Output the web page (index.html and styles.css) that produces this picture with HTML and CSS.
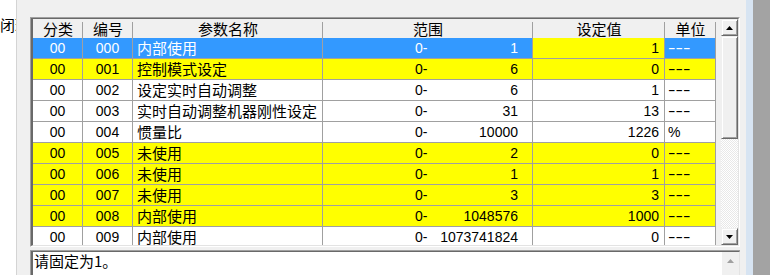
FILE: index.html
```html
<!DOCTYPE html>
<html lang="zh-CN">
<head>
    <meta charset="UTF-8">
    <title>参数设定</title>
    <link rel="stylesheet" href="styles.css">
</head>
<body>
    <div class="side"><span>闭环</span></div>

    <div class="panel">
        <div class="grid">
            <div class="grid-in">
                <div class="list">
                    <div class="row head">
                        <div class="cell">分类</div>
                        <div class="cell">编号</div>
                        <div class="cell">参数名称</div>
                        <div class="cell">范围</div>
                        <div class="cell">设定值</div>
                        <div class="cell">单位</div>
                    </div>
                    <div class="row yellow sel">
                        <div class="cell c">00</div><div class="cell c">000</div>
                        <div class="cell name">内部使用</div>
                        <div class="cell range"><span>0-</span><span>1</span></div>
                        <div class="cell val">1</div><div class="cell unit"><span>---</span></div>
                    </div>
                    <div class="row yellow">
                        <div class="cell c">00</div><div class="cell c">001</div>
                        <div class="cell name">控制模式设定</div>
                        <div class="cell range"><span>0-</span><span>6</span></div>
                        <div class="cell val">0</div><div class="cell unit"><span>---</span></div>
                    </div>
                    <div class="row">
                        <div class="cell c">00</div><div class="cell c">002</div>
                        <div class="cell name">设定实时自动调整</div>
                        <div class="cell range"><span>0-</span><span>6</span></div>
                        <div class="cell val">1</div><div class="cell unit"><span>---</span></div>
                    </div>
                    <div class="row">
                        <div class="cell c">00</div><div class="cell c">003</div>
                        <div class="cell name">实时自动调整机器刚性设定</div>
                        <div class="cell range"><span>0-</span><span>31</span></div>
                        <div class="cell val">13</div><div class="cell unit"><span>---</span></div>
                    </div>
                    <div class="row">
                        <div class="cell c">00</div><div class="cell c">004</div>
                        <div class="cell name">惯量比</div>
                        <div class="cell range"><span>0-</span><span>10000</span></div>
                        <div class="cell val">1226</div><div class="cell unit">%</div>
                    </div>
                    <div class="row yellow">
                        <div class="cell c">00</div><div class="cell c">005</div>
                        <div class="cell name">未使用</div>
                        <div class="cell range"><span>0-</span><span>2</span></div>
                        <div class="cell val">0</div><div class="cell unit"><span>---</span></div>
                    </div>
                    <div class="row yellow">
                        <div class="cell c">00</div><div class="cell c">006</div>
                        <div class="cell name">未使用</div>
                        <div class="cell range"><span>0-</span><span>1</span></div>
                        <div class="cell val">1</div><div class="cell unit"><span>---</span></div>
                    </div>
                    <div class="row yellow">
                        <div class="cell c">00</div><div class="cell c">007</div>
                        <div class="cell name">未使用</div>
                        <div class="cell range"><span>0-</span><span>3</span></div>
                        <div class="cell val">3</div><div class="cell unit"><span>---</span></div>
                    </div>
                    <div class="row yellow">
                        <div class="cell c">00</div><div class="cell c">008</div>
                        <div class="cell name">内部使用</div>
                        <div class="cell range"><span>0-</span><span>1048576</span></div>
                        <div class="cell val">1000</div><div class="cell unit"><span>---</span></div>
                    </div>
                    <div class="row">
                        <div class="cell c">00</div><div class="cell c">009</div>
                        <div class="cell name">内部使用</div>
                        <div class="cell range"><span>0-</span><span>1073741824</span></div>
                        <div class="cell val">0</div><div class="cell unit"><span>---</span></div>
                    </div>
                </div>
                <div class="gap"></div>
                <div class="vscroll">
                    <div class="btn">
                        <svg width="7" height="4" viewBox="0 0 7 4"><polygon points="3.5,0 7,4 0,4" fill="#000"/></svg>
                    </div>
                    <div class="btn thumb"></div>
                    <div class="track"></div>
                    <div class="btn">
                        <svg width="7" height="4" viewBox="0 0 7 4"><polygon points="0,0 7,0 3.5,4" fill="#000"/></svg>
                    </div>
                </div>
            </div>
        </div>

        <div class="memo">
            <div class="memo-in">
                <div class="memo-text">请固定为1。</div>
                <div class="vscroll flat">
                    <div class="btn off">
                        <svg width="7" height="4" viewBox="0 0 7 4"><polygon points="3.5,0 7,4 0,4" fill="#a0a0a0"/></svg>
                    </div>
                </div>
            </div>
        </div>
    </div>

    <div class="edge"></div>
    <div class="frame"></div>
</body>
</html>
```

FILE: styles.css
```css
body {
    margin: 0;
    width: 770px;
    height: 275px;
    overflow: hidden;
    display: flex;
    font-family: "Liberation Sans", "Noto Sans CJK SC", sans-serif;
    font-size: 14px;
    color: #000;
}
.side {
    width: 16px;
    border-right: 1px solid #d4d4d4;
    background: #fff;
    overflow: hidden;
    white-space: nowrap;
}
.side span {
    display: block;
    margin-top: 17px;
    font-family: "Noto Sans CJK SC", sans-serif;
    font-size: 15px;
    line-height: 16px;
}
.panel {
    width: 729px;
    background: #f0f0f0;
    padding: 17px 0 0 13px;
    box-sizing: border-box;
}
.edge {
    width: 7px;
    background: #d7e4f2;
}
.frame {
    width: 17px;
    background: #a3a3a3;
}

/* parameter list */
.grid {
    width: 710px;
    height: 230px;
    box-sizing: border-box;
    border: 1px solid;
    border-color: #a0a0a0 #fff #fff #a0a0a0;
}
.grid-in {
    height: 100%;
    box-sizing: border-box;
    border-style: solid;
    border-width: 1px 1px 1px 2px;
    border-color: #696969 #e3e3e3 #e3e3e3 #696969;
    display: flex;
}
.list {
    width: 683px;
    overflow: hidden;
    background: #fff;
}
.gap {
    width: 5px;
}
.row {
    display: grid;
    grid-template-columns: 50px 50px 190px 210px 132px 51px;
    height: 21px;
}
.cell {
    border-right: 1px solid #a0a0a0;
    border-bottom: 1px solid #a0a0a0;
    line-height: 20px;
    white-space: nowrap;
    overflow: hidden;
}
.head {
    height: 19px;
    background: #f0f0f0;
}
.head .cell {
    border: 0;
    text-align: center;
    line-height: 19px;
    font-family: "Noto Sans CJK SC", sans-serif;
    font-size: 15px;
    background: linear-gradient(#a0a0a0, #a0a0a0) right 3px / 1px 16px no-repeat;
}
.c {
    text-align: center;
}
.name {
    padding-left: 4px;
    font-family: "Noto Sans CJK SC", sans-serif;
    font-size: 15px;
}
.range {
    display: flex;
    justify-content: space-between;
    padding: 0 14px 0 92px;
}
.val {
    text-align: right;
    padding-right: 5px;
}
.unit {
    padding-left: 3px;
}
.unit span {
    display: inline-block;
    transform: scaleX(1.6);
    transform-origin: left center;
}
.yellow .cell {
    background: #ffff00;
}
.sel .cell:not(.val) {
    background: #3399ff;
    color: #fff;
}

/* scroll bars */
.vscroll {
    width: 17px;
    display: flex;
    flex-direction: column;
    background: repeating-conic-gradient(#fff 0 25%, #e8e8e8 0 50%) 0 0 / 2px 2px;
}
.btn {
    height: 17px;
    box-sizing: border-box;
    background: #f0f0f0;
    border: 1px solid;
    border-color: #f0f0f0 #696969 #696969 #f0f0f0;
    box-shadow: inset 1px 1px #fff, inset -1px -1px #a0a0a0;
    display: flex;
    align-items: center;
    justify-content: center;
}
.thumb {
    height: 103px;
}
.track {
    flex: 1;
}
.vscroll.flat {
    background: #f0f0f0;
}
.btn.off {
    border-color: #f0f0f0;
    box-shadow: none;
}

/* description box */
.memo {
    width: 710px;
    height: 30px;
    margin-top: 3px;
    box-sizing: border-box;
    border-top: 1px solid #a0a0a0;
    border-left: 1px solid #a0a0a0;
}
.memo-in {
    height: 100%;
    box-sizing: border-box;
    border-top: 1px solid #696969;
    border-left: 2px solid #696969;
    border-right: 1px solid #e3e3e3;
    display: flex;
    background: #fff;
}
.memo-text {
    flex: 1;
    padding-left: 1px;
    font-family: "Noto Sans CJK SC", sans-serif;
    font-size: 15px;
    line-height: 18px;
}
```
